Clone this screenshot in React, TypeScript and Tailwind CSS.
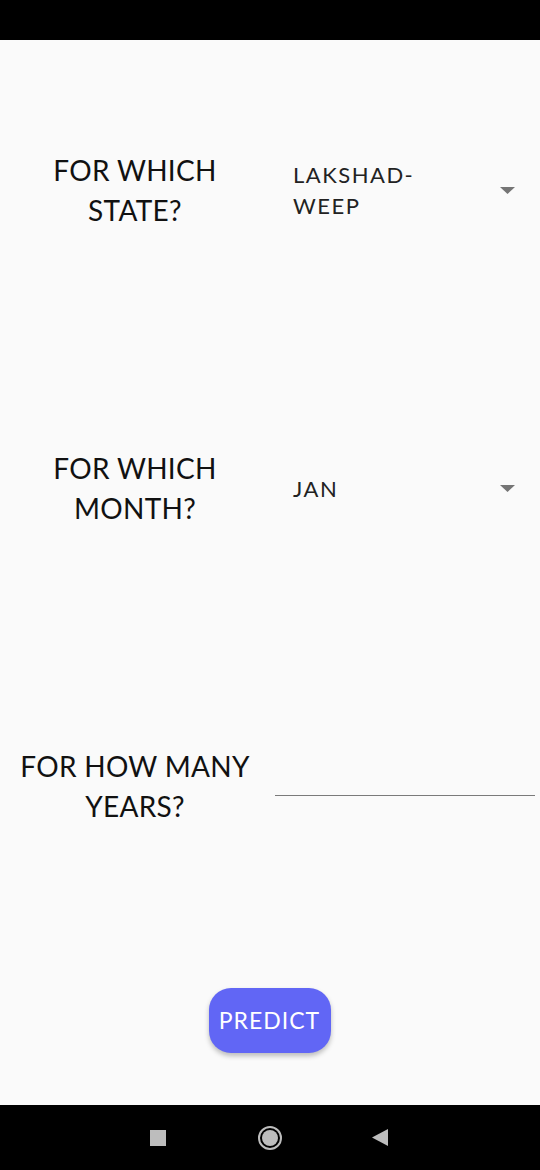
import React, { useState } from 'react';

const font = { fontFamily: 'Lato, "Noto Sans", sans-serif' };

const Arrow = () => (
  <svg width="15" height="7" viewBox="0 0 15 7" className="shrink-0">
    <path d="M0 0 H15 L7.5 7 Z" fill="#757575" />
  </svg>
);

const Row = ({ label, children }: { label: React.ReactNode; children: React.ReactNode }) => (
  <div className="h-[298px] flex items-center">
    <div className="w-[270px] text-center text-[28px] leading-[40px] text-[#111] tracking-[0.3px]">{label}</div>
    <div className="flex-1 flex items-center">{children}</div>
  </div>
);

const App = () => {
  const [years, setYears] = useState('');

  return (
    <div className="w-[540px] h-[1170px] flex flex-col bg-[#fafafa] overflow-hidden" style={font}>
      {/* status bar */}
      <div className="h-[40px] bg-black" />

      <div className="h-[1065px] flex flex-col pt-px">
        <Row label={<>FOR WHICH<br />STATE?</>}>
          <div className="flex-1 flex items-center justify-between pl-[23px] pr-[25px]">
            <div className="text-[22px] leading-[31px] tracking-[1.5px] text-[#222]">LAKSHAD-<br />WEEP</div>
            <Arrow />
          </div>
        </Row>

        <Row label={<>FOR WHICH<br />MONTH?</>}>
          <div className="flex-1 flex items-center justify-between pl-[23px] pr-[25px]">
            <div className="text-[22px] leading-[31px] tracking-[1.5px] text-[#222]">JAN</div>
            <Arrow />
          </div>
        </Row>

        <Row label={<>FOR HOW MANY<br />YEARS?</>}>
          <div className="flex-1 px-[5px]">
            <input
              value={years}
              onChange={(e) => setYears(e.target.value)}
              className="w-full h-[20px] bg-transparent border-b border-[#7a7a7a] outline-none text-[18px]"
            />
          </div>
        </Row>

        <div className="flex-1 flex items-center justify-center">
          <button className="w-[122px] h-[65px] ml-[-1px] rounded-[22px] bg-[#6166f5] text-white text-[23px] tracking-[1px] shadow-[0_3px_5px_rgba(0,0,0,0.25)]">
            PREDICT
          </button>
        </div>
      </div>

      {/* navigation bar */}
      <div className="flex-1 bg-black flex items-center">
        <div className="w-[16px] h-[16px] bg-[#bdbdbd] ml-[150px]" />
        <div className="w-[24px] h-[24px] rounded-full border-2 border-[#bdbdbd] flex items-center justify-center ml-[92px]">
          <div className="w-[16px] h-[16px] rounded-full bg-[#bdbdbd]" />
        </div>
        <svg width="16" height="17" viewBox="0 0 16 17" className="ml-[90px]">
          <path d="M16 0 V17 L0 8.5 Z" fill="#bdbdbd" />
        </svg>
      </div>
    </div>
  );
};

export default App;
